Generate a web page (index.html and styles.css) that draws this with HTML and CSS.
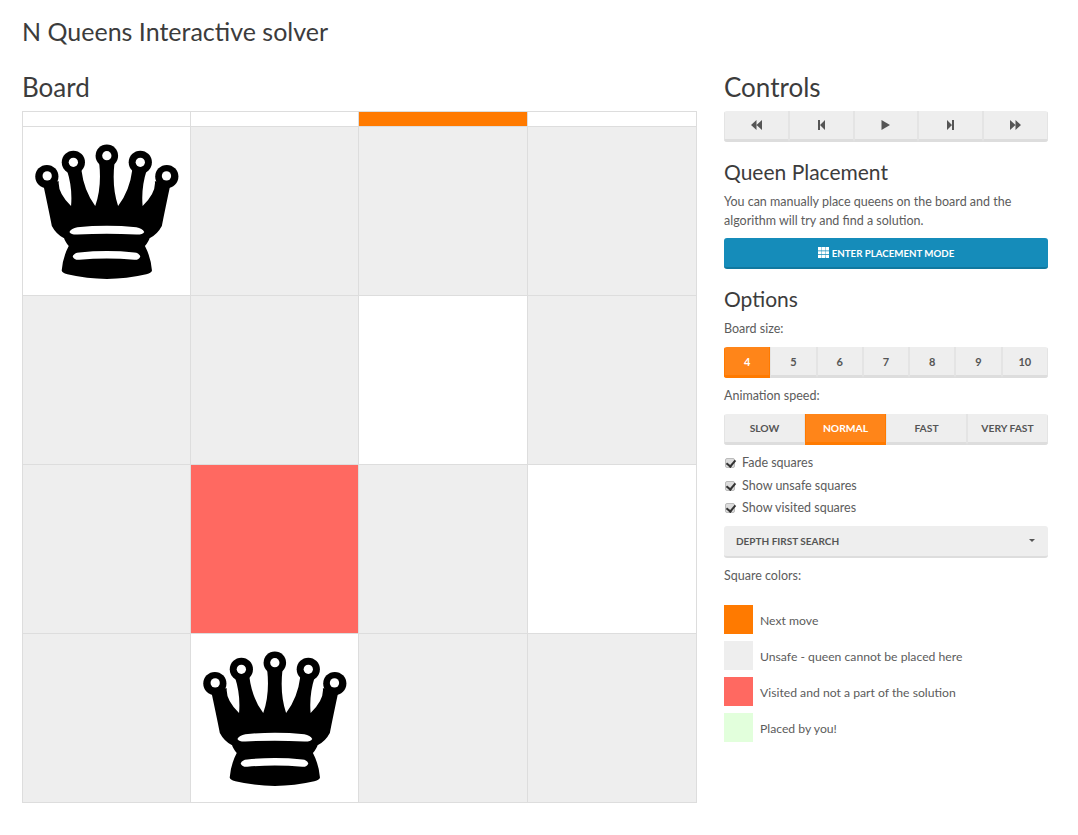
FILE: index.html
```html
<!DOCTYPE html>
<html lang="en">
<head>
    <meta charset="UTF-8">
    <title>N Queens Interactive solver</title>
    <link rel="stylesheet" href="styles.css">
</head>
<body>
    <svg class="svgDefs" width="0" height="0">
        <defs>
            <symbol id="queen" viewBox="8 78 504 504">
                <path d="M125 508 Q128 470 146 436 Q134 420 132 412 Q108 400 95 375 Q84 320 68 245 L116 240 Q112 275 153 315 Q158 260 140 205 L184 205 Q192 270 226 315 Q246 260 238 185 L284 185 Q276 260 295 315 Q330 270 338 205 L382 205 Q364 260 369 315 Q410 275 406 240 L454 245 Q438 320 427 375 Q414 400 390 412 Q388 420 376 436 Q394 470 397 508 Q399 516 380 521 Q320 535 261 535 Q202 535 142 521 Q123 516 125 508Z"/>
                <circle cx="80" cy="226" r="35"/><circle cx="160" cy="183" r="35"/><circle cx="261" cy="163" r="34"/><circle cx="362" cy="183" r="35"/><circle cx="442" cy="226" r="35"/>
                <g fill="#fff">
                    <circle cx="81" cy="224" r="14"/><circle cx="160" cy="183" r="14"/><circle cx="261" cy="163" r="14"/><circle cx="362" cy="183" r="14"/><circle cx="441" cy="224" r="14"/>
                    <path d="M148 393 Q154 382 172 379 Q261 370 350 379 Q368 382 374 393 Q368 402 350 401 Q261 396 172 401 Q154 402 148 393Z"/>
                    <path d="M158 467 Q162 456 178 455 Q261 446 344 455 Q358 456 362 467 Q358 478 344 477 Q261 470 178 477 Q162 478 158 467Z"/>
                </g>
            </symbol>
        </defs>
    </svg>

    <h1 class="pageTitle">N Queens Interactive solver</h1>

    <div class="mainRow">
        <div class="boardCol">
            <h2 class="colTitle">Board</h2>
            <div class="board">
                <div class="slot"></div><div class="slot"></div><div class="slot slotNext"></div><div class="slot"></div>

                <div class="square"><svg class="queen"><use href="#queen"/></svg></div>
                <div class="square unsafe"></div>
                <div class="square unsafe"></div>
                <div class="square unsafe"></div>

                <div class="square unsafe"></div>
                <div class="square unsafe"></div>
                <div class="square"></div>
                <div class="square unsafe"></div>

                <div class="square unsafe"></div>
                <div class="square visited"></div>
                <div class="square unsafe"></div>
                <div class="square"></div>

                <div class="square unsafe"></div>
                <div class="square"><svg class="queen"><use href="#queen"/></svg></div>
                <div class="square unsafe"></div>
                <div class="square unsafe"></div>
            </div>
        </div>

        <div class="sideCol">
            <h2 class="colTitle">Controls</h2>
            <div class="btnGroup transport">
                <button class="btn"><svg class="tIcon" viewBox="0 0 11 10"><path d="M5.500 0v10L0 5zM11 0v10L5.500 5z"/></svg></button>
                <button class="btn"><svg class="tIcon" viewBox="0 0 11 10"><path d="M2 0h2v10H2zM9 0v10L4 5z"/></svg></button>
                <button class="btn"><svg class="tIcon" viewBox="0 0 11 10"><path d="M1.500 0v10L10 5z"/></svg></button>
                <button class="btn"><svg class="tIcon" viewBox="0 0 11 10"><path d="M2 0v10L7 5zM7 0h2v10H7z"/></svg></button>
                <button class="btn"><svg class="tIcon" viewBox="0 0 11 10"><path d="M0 0v10L5.500 5zM5.500 0v10L11 5z"/></svg></button>
            </div>

            <h3 class="subTitle firstSub">Queen Placement</h3>
            <p class="note">You can manually place queens on the board and the algorithm will try and find a solution.</p>
            <button class="primaryBtn"><svg class="gridIcon" viewBox="0 0 11 11"><path d="M0 0h3.400v3.400H0zM3.800 0h3.400v3.400H3.800zM7.600 0H11v3.400H7.600zM0 4.200h3.400v3H0zM3.800 4.200h3.400v3H3.800zM7.600 4.200H11v3H7.600zM0 8h3.400v3H0zM3.800 8h3.400v3H3.800zM7.600 8H11v3H7.600z"/></svg>ENTER PLACEMENT MODE</button>

            <h3 class="subTitle">Options</h3>
            <p class="fieldLabel">Board size:</p>
            <div class="btnGroup sizes">
                <button class="btn active">4</button>
                <button class="btn">5</button>
                <button class="btn">6</button>
                <button class="btn">7</button>
                <button class="btn">8</button>
                <button class="btn">9</button>
                <button class="btn">10</button>
            </div>
            <p class="fieldLabel speedLabel">Animation speed:</p>
            <div class="btnGroup speeds">
                <button class="btn">SLOW</button>
                <button class="btn active">NORMAL</button>
                <button class="btn">FAST</button>
                <button class="btn">VERY FAST</button>
            </div>

            <ul class="checks">
                <li><input type="checkbox" checked> Fade squares</li>
                <li><input type="checkbox" checked> Show unsafe squares</li>
                <li><input type="checkbox" checked> Show visited squares</li>
            </ul>

            <button class="selectBtn">DEPTH FIRST SEARCH<span class="caret"></span></button>

            <p class="fieldLabel colorsLabel">Square colors:</p>
            <ul class="legend">
                <li><span class="swatch swNext"></span>Next move</li>
                <li><span class="swatch swUnsafe"></span>Unsafe - queen cannot be placed here</li>
                <li><span class="swatch swVisited"></span>Visited and not a part of the solution</li>
                <li><span class="swatch swPlaced"></span>Placed by you!</li>
            </ul>
        </div>
    </div>
</body>
</html>
```
FILE: styles.css
```css
*{
    box-sizing: border-box;
}
body{
    margin: 0;
    padding: 0 30px 0 22px;
    background: #fff;
    color: #3c3c3c;
    font-family: "Lato", "Noto Sans", sans-serif;
    font-size: 13px;
}
.svgDefs{
    display: block;
}
.pageTitle{
    margin: 0;
    padding-top: 15px;
    height: 73px;
    font-size: 25px;
    line-height: 32px;
    font-weight: 400;
}
.mainRow{
    display: flex;
    gap: 27px;
}
.boardCol{
    width: 675px;
}
.sideCol{
    width: 324px;
}
.colTitle{
    margin: 0;
    height: 38px;
    font-size: 26px;
    line-height: 29px;
    font-weight: 400;
}
.board{
    display: grid;
    grid-template-columns: 168px 168px 169px 169px;
    grid-template-rows: 15px repeat(4, 169px);
    border-top: 1px solid #ddd;
    border-left: 1px solid #ddd;
}
.slot,.square{
    border-right: 1px solid #ddd;
    border-bottom: 1px solid #ddd;
}
.slotNext{
    background: #ff7a00;
}
.unsafe{
    background: #eee;
}
.visited{
    background: #ff6961;
}
.queen{
    display: block;
    width: 100%;
    height: 100%;
}

.btnGroup{
    display: flex;
    border-radius: 3px;
    overflow: hidden;
}
.btn{
    flex: 1;
    min-width: 0;
    padding: 0;
    border: 0 solid #e4e4e4;
    border-width: 0 1px 3px;
    border-bottom-color: #ddd;
    background: #eee;
    color: #555;
    font-family: inherit;
    font-size: 10.300px;
    font-weight: 700;
}
.btn.active{
    background: #ff8519;
    border-color: #ff7a00;
    color: #fff;
}
.sizes .btn{
    font-size: 11px;
}
.transport{
    height: 31px;
}
.tIcon{
    display: block;
    width: 11px;
    height: 10px;
    margin: 0 auto;
    fill: #555;
}
.subTitle{
    margin: 0;
    font-size: 21px;
    line-height: 28px;
    font-weight: 400;
}
.firstSub{
    margin-top: 16px;
}
.note{
    margin: 6px 0 0;
    font-size: 12.500px;
    line-height: 19px;
    color: #5c5c5c;
}
.primaryBtn{
    display: block;
    width: 100%;
    height: 31px;
    margin: 8px 0 16px;
    border: 0;
    border-bottom: 2px solid #10789f;
    border-radius: 3px;
    background: #158cba;
    color: #fff;
    font-family: inherit;
    font-size: 9.700px;
    font-weight: 700;
}
.gridIcon{
    width: 11px;
    height: 11px;
    margin-right: 3px;
    fill: #fff;
    vertical-align: -1px;
}
.fieldLabel{
    margin: 8px 0 0;
    font-size: 12.500px;
    line-height: 16px;
    color: #5c5c5c;
}
.sizes{
    height: 31px;
    margin-top: 10px;
}
.speedLabel{
    margin-top: 10px;
}
.speeds{
    height: 31px;
    margin-top: 10px;
}
.checks{
    list-style: none;
    margin: 7px 0 0;
    padding: 0;
    font-size: 12.500px;
    color: #5c5c5c;
}
.checks li{
    height: 22.500px;
    line-height: 22px;
    display: flex;
    align-items: center;
    gap: 7px;
}
.checks input{
    appearance: none;
    position: relative;
    width: 10px;
    height: 10px;
    margin: 0 0 0 1px;
    border: 1px solid #bbb;
    border-radius: 2px;
    background: #ddd;
}
.checks input::before{
    content: "";
    position: absolute;
    left: 2px;
    top: -1px;
    width: 4px;
    height: 7px;
    border: solid #333;
    border-width: 0 2px 2px 0;
    transform: rotate(40deg);
}
.selectBtn{
    display: flex;
    justify-content: space-between;
    align-items: center;
    width: 100%;
    height: 32px;
    margin-top: 6px;
    padding: 0 12px;
    border: 0;
    border-bottom: 2px solid #ddd;
    border-radius: 3px;
    background: #eee;
    color: #555;
    font-family: inherit;
    font-size: 10px;
    font-weight: 700;
}
.caret{
    width: 0;
    height: 0;
    margin-right: 1px;
    border-top: 3.500px solid #555;
    border-left: 3.500px solid transparent;
    border-right: 3.500px solid transparent;
}
.colorsLabel{
    margin-top: 10px;
}
.legend{
    list-style: none;
    margin: 21px 0 0;
    padding: 0;
    font-size: 12.200px;
    line-height: 31px;
    color: #5c5c5c;
}
.legend li{
    display: flex;
    align-items: flex-start;
    gap: 7px;
    height: 29px;
    margin-bottom: 7px;
}
.swatch{
    width: 29px;
    height: 29px;
}
.swNext{background: #ff7a00;}
.swUnsafe{background: #eee;}
.swVisited{background: #ff6961;}
.swPlaced{background: #e2ffdc;}
```
